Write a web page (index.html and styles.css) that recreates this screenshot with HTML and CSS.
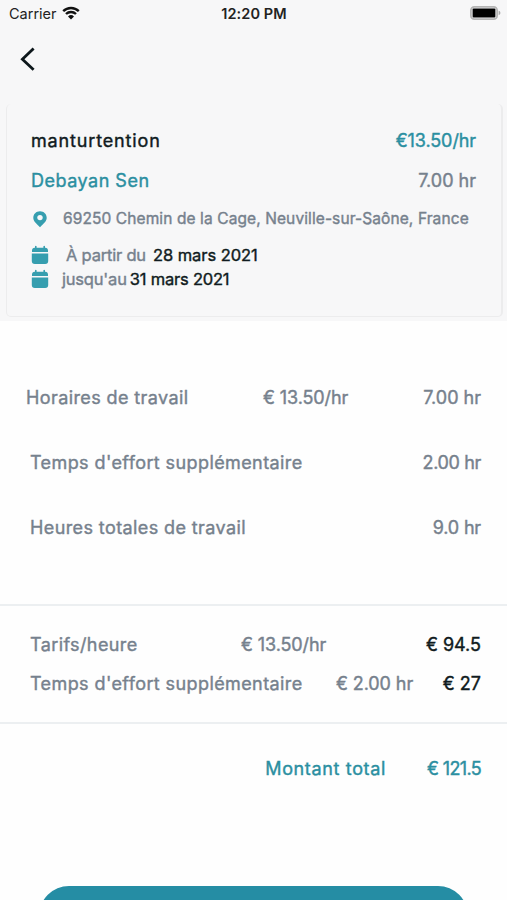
FILE: index.html
```html
<!DOCTYPE html>
<html lang="fr">

<head>
    <meta charset="UTF-8">
    <meta name="viewport" content="width=device-width, initial-scale=1.0">
    <title>Montant total</title>
    <link rel="stylesheet" href="styles.css">
</head>

<body>
    <div class="top">
        <div class="status-bar">
            <div class="carrier">
                <span>Carrier</span>
                <svg class="wifi" viewBox="0 0 18 14">
                    <path d="M1.2 5.1a11.2 11.2 0 0 1 15.6 0M4 8a7.2 7.2 0 0 1 10 0" />
                    <path class="dot" d="M9 13.6l-3-3.1a4.4 4.4 0 0 1 6 0z" />
                </svg>
            </div>
            <span class="time">12:20 PM</span>
            <svg class="battery" viewBox="0 0 31 14">
                <rect class="case" x="0.9" y="0.9" width="26.2" height="12.2" rx="3.4" />
                <rect class="level" x="2.6" y="2.6" width="22.8" height="8.8" rx="1" />
                <path class="cap" d="M28.6 4.8c2.4.6 2.4 3.8 0 4.4z" />
            </svg>
        </div>
        <div class="nav">
            <svg class="back" viewBox="0 0 16 24">
                <path d="M13.6 1.4L2.4 12.2l11.2 10.6" />
            </svg>
        </div>
        <div class="card">
            <div class="card-row">
                <span class="dark job-title">manturtention</span>
                <span class="teal job-rate">€13.50/hr</span>
            </div>
            <div class="card-row person">
                <span class="teal person-name">Debayan Sen</span>
                <span>7.00 hr</span>
            </div>
            <div class="card-line address">
                <svg class="pin" viewBox="0 0 14 17">
                    <path d="M7 .3C3.2.3.3 3.2.3 6.8c0 3.5 2.6 5.3 6.7 9.4 4.1-4.1 6.7-5.9 6.7-9.4C13.7 3.2 10.8.3 7 .3z" />
                    <circle cx="7" cy="6.6" r="2.7" />
                </svg>
                <span>69250 Chemin de la Cage, Neuville-sur-Saône, France</span>
            </div>
            <div class="card-line date from">
                <svg class="calendar" viewBox="0 0 18 20">
                    <path d="M1 7V5.5C1 3.8 2 2.7 3.6 2.7H4V1.3q.8-1.2 1.6 0v1.4h6.8V1.3q.8-1.2 1.6 0v1.4h.4C16 2.7 17 3.8 17 5.5V7zM.8 8.5h16.400V16c0 2-1 3-3 3H3.800c-2 0-3-1-3-3z" />
                </svg>
                <span class="from-label">À partir du</span>
                <span class="dark from-date">28 mars 2021</span>
            </div>
            <div class="card-line date">
                <svg class="calendar" viewBox="0 0 18 20">
                    <path d="M1 7V5.5C1 3.8 2 2.7 3.6 2.7H4V1.3q.8-1.2 1.6 0v1.4h6.8V1.3q.8-1.2 1.6 0v1.4h.4C16 2.7 17 3.8 17 5.5V7zM.8 8.5h16.400V16c0 2-1 3-3 3H3.800c-2 0-3-1-3-3z" />
                </svg>
                <span class="until-label">jusqu'au</span>
                <span class="dark">31 mars 2021</span>
            </div>
        </div>
    </div>

    <div class="section work">
        <div class="row first">
            <span class="label work-label">Horaires de travail</span>
            <span class="rate">€ 13.50/hr</span>
            <span class="value">7.00 hr</span>
        </div>
        <div class="row">
            <span class="label">Temps d'effort supplémentaire</span>
            <span class="value extra-hours">2.00 hr</span>
        </div>
        <div class="row">
            <span class="label">Heures totales de travail</span>
            <span class="value total-hours">9.0 hr</span>
        </div>
    </div>

    <div class="section rates">
        <div class="row">
            <span class="label rate-label">Tarifs/heure</span>
            <span class="rate">€ 13.50/hr</span>
            <span class="value dark">€ 94.5</span>
        </div>
        <div class="row">
            <span class="label extra-label">Temps d'effort supplémentaire</span>
            <span class="rate">€ 2.00 hr</span>
            <span class="value dark">€ 27</span>
        </div>
    </div>

    <div class="section total">
        <span class="teal sum-label">Montant total</span>
        <span class="teal sum">€ 121.5</span>
    </div>

    <div class="footer">
        <button class="submit" type="button"></button>
    </div>
</body>

</html>
```
FILE: styles.css
```css
* {
    box-sizing: border-box;
}

body {
    margin: 0;
    background-color: #fefefe;
    color: #76818d;
    font-family: Inter, "Liberation Sans", sans-serif;
    font-size: 18px;
    line-height: 24px;
    -webkit-text-stroke: 0.4px;
}

span {
    white-space: nowrap;
}

svg {
    display: block;
    flex: none;
}

.dark {
    color: #101b20;
}

.teal {
    color: #2b8fa1;
}

.top {
    height: 321px;
    background-color: #f7f7f8;
}

.status-bar {
    display: grid;
    grid-template-columns: 1fr auto 1fr;
    align-items: center;
    height: 27px;
    padding: 0 6px 0 9px;
    font-size: 14.5px;
    color: #222;
    -webkit-text-stroke: 0;
}

.carrier {
    display: flex;
    align-items: center;
    gap: 5px;
}

.wifi {
    width: 18px;
    height: 14px;
    margin-top: -2px;
    fill: none;
    stroke: #111;
    stroke-width: 2.4;
}

.wifi .dot {
    fill: #111;
    stroke: none;
}

.time {
    margin-right: 2px;
    font-weight: 600;
    letter-spacing: 0.1px;
}

.battery {
    justify-self: end;
    width: 31px;
    height: 14px;
    margin-top: -1px;
}

.battery .case {
    fill: none;
    stroke: #b5b5b5;
    stroke-width: 1.8;
}

.battery .cap {
    fill: #aaa;
}

.nav {
    height: 77px;
    padding: 20px;
}

.back {
    width: 16px;
    height: 24px;
    fill: none;
    stroke: #0d171b;
    stroke-width: 2.8;
}

.card {
    width: 497px;
    height: 213px;
    margin-left: 6px;
    padding: 25px 25px 0 24px;
    border: solid #ececed;
    border-width: 0 2px 1px 1px;
    border-radius: 5px;
}

.card-row,
.card-line,
.row {
    display: flex;
    align-items: center;
    height: 24px;
}

.card-row {
    justify-content: space-between;
}

.job-title {
    letter-spacing: 0.85px;
}

.job-rate,
.rate {
    letter-spacing: -0.1px;
}

.person {
    margin-top: 16px;
}

.person-name {
    letter-spacing: 0.5px;
}

.address {
    margin-top: 14px;
    font-size: 15.5px;
    letter-spacing: 0.1px;
}

.date {
    font-size: 16.5px;
    letter-spacing: -0.2px;
}

.from {
    margin-top: 12px;
}

.from-label {
    margin: 0 7px 0 4px;
}

.from-date {
    letter-spacing: -0.05px;
}

.until-label {
    margin-right: 3px;
}

.pin {
    width: 14px;
    height: 17px;
    margin: 0 16px 0 2px;
    fill: #369eaf;
}

.pin circle {
    fill: #f7f7f8;
}

.calendar {
    width: 18px;
    height: 20px;
    margin: -1px 13px 0 0;
    fill: #369eaf;
}

.section {
    padding: 0 26px 0 30px;
}

.work {
    height: 285px;
    padding-top: 65px;
    border-bottom: 2px solid #eceff1;
}

.work .row {
    margin-bottom: 41px;
}

.work .first {
    margin-left: -4px;
}

.label {
    letter-spacing: 0.4px;
}

.work-label {
    width: 237px;
}

.rate-label {
    width: 211px;
}

.extra-label {
    width: 306px;
}

.value {
    margin-left: auto;
}

.extra-hours {
    letter-spacing: -0.35px;
}

.total-hours {
    letter-spacing: -0.15px;
}

.rates {
    height: 118px;
    padding-top: 27px;
    border-bottom: 2px solid #eceff1;
}

.rates .row {
    margin-bottom: 15px;
}

.total {
    display: flex;
    justify-content: flex-end;
    gap: 41px;
    height: 162px;
    padding-top: 33px;
}

.sum-label {
    letter-spacing: 0.65px;
}

.sum {
    letter-spacing: -0.65px;
}

/* the button is cut by the bottom of the screen */
.footer {
    height: 14px;
    padding: 0 39px;
    overflow: hidden;
}

.submit {
    display: block;
    width: 100%;
    height: 60px;
    border: 0;
    border-radius: 30px;
    background-color: #258da4;
}
```
